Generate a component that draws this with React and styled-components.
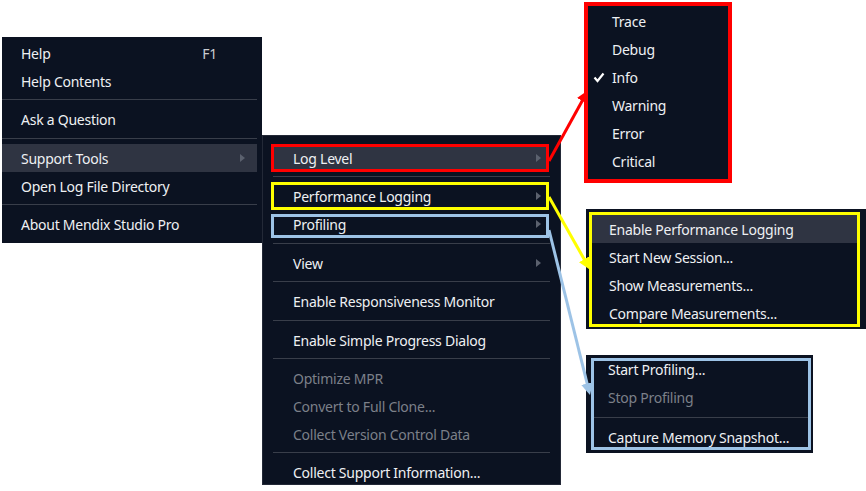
import React from "react";
import styled, { createGlobalStyle, css } from "styled-components";

const GlobalStyle = createGlobalStyle`
  html, body { margin: 0; padding: 0; background: #ffffff; }
  body { font-family: "Noto Sans", "Open Sans", Arial, sans-serif; }
  * { box-sizing: border-box; }
`;

const BG = "#0b1221";
const HILITE = "#2f3442";
const SEP = "#393e4a";

const Canvas = styled.div`
  position: relative;
  width: 866px;
  height: 491px;
  overflow: hidden;
  background: #ffffff;
`;

const Panel = styled.div`
  position: absolute;
  left: ${(p) => p.$x}px;
  top: ${(p) => p.$y}px;
  width: ${(p) => p.$w}px;
  height: ${(p) => p.$h}px;
  background: ${BG};
  display: flex;
  flex-direction: column;
  padding: ${(p) => p.$pad || "0"};
  border: ${(p) => p.$border || "none"};
  ${(p) =>
    p.$frame &&
    css`
      &::after {
        content: "";
        position: absolute;
        inset: ${p.$frameInset};
        border: 3px solid ${p.$frame};
        pointer-events: none;
      }
    `}
`;

const Item = styled.div`
  position: relative;
  flex: none;
  height: 28px;
  display: flex;
  align-items: center;
  margin: ${(p) => p.$margin || "0"};
  padding-left: ${(p) => p.$indent}px;
  padding-right: ${(p) => p.$rpad || 0}px;
  font-size: 14px;
  letter-spacing: -0.25px;
  color: ${(p) => (p.$disabled ? "#7c8089" : "#eef0f3")};
  background: ${(p) => (p.$active ? HILITE : "transparent")};
  white-space: nowrap;
  ${(p) =>
    p.$mark &&
    css`
      &::after {
        content: "";
        position: absolute;
        inset: ${p.$markTop || 0}px 0 0 0;
        border: 3px solid ${p.$mark};
        pointer-events: none;
      }
    `}
`;

const Label = styled.span`
  flex: 1;
`;

const Shortcut = styled.span`
  color: #c9ccd2;
  margin-right: ${(p) => p.$right}px;
`;

const SubArrow = styled.span`
  width: 0;
  height: 0;
  border-left: 5px solid #5b616e;
  border-top: 4px solid transparent;
  border-bottom: 4px solid transparent;
`;

const Separator = styled.div`
  flex: none;
  height: 1px;
  background: ${SEP};
  margin: ${(p) => p.$margin};
`;

const CheckSlot = styled.span`
  width: 19px;
  display: flex;
  align-items: center;
`;

const Overlay = styled.svg`
  position: absolute;
  left: 0;
  top: 0;
  pointer-events: none;
`;

const Check = () => (
  <svg width="12" height="11" viewBox="0 0 12 11">
    <polyline points="1.5,5.5 4.5,9 10.5,1.5" fill="none" stroke="#ffffff" strokeWidth="2.2" />
  </svg>
);

const MainItem = ({ children, shortcut, sub, active }) => (
  <Item $indent={19} $rpad={sub ? 12 : 0} $margin="0 5px 0 0" $active={active}>
    <Label>{children}</Label>
    {shortcut && <Shortcut $right={40}>{shortcut}</Shortcut>}
    {sub && <SubArrow />}
  </Item>
);

const SubItem = ({ children, sub, active, disabled, mark, markTop }) => (
  <Item
    $indent={22}
    $rpad={8}
    $margin="0 11px 0 8px"
    $active={active}
    $disabled={disabled}
    $mark={mark}
    $markTop={markTop}
  >
    <Label>{children}</Label>
    {sub && <SubArrow />}
  </Item>
);

const mainSep = "4px 5px 5px 0";
const subSep = "4px 10px 5px 10px";

export default function App() {
  return (
    <>
      <GlobalStyle />
      <Canvas>
        <Panel $x={2} $y={37} $w={260} $h={206} $pad="2px 0 0 0">
          <MainItem shortcut="F1">Help</MainItem>
          <MainItem>Help Contents</MainItem>
          <Separator $margin={mainSep} />
          <MainItem>Ask a Question</MainItem>
          <Separator $margin="5px 5px 5px 0" />
          <MainItem sub active>Support Tools</MainItem>
          <MainItem>Open Log File Directory</MainItem>
          <Separator $margin={mainSep} />
          <MainItem>About Mendix Studio Pro</MainItem>
        </Panel>

        <Panel
          $x={262}
          $y={135}
          $w={299}
          $h={350}
          $pad="8px 0 0 0"
          $border="1px solid #232937"
        >
          <SubItem sub active mark="#ff0000">Log Level</SubItem>
          <Separator $margin={subSep} />
          <SubItem sub mark="#ffff00">Performance Logging</SubItem>
          <SubItem sub mark="#9dc3e6" markTop={4}>Profiling</SubItem>
          <Separator $margin="5px 10px 5px 10px" />
          <SubItem sub>View</SubItem>
          <Separator $margin={subSep} />
          <SubItem>Enable Responsiveness Monitor</SubItem>
          <Separator $margin="5px 10px 5px 10px" />
          <SubItem>Enable Simple Progress Dialog</SubItem>
          <Separator $margin={subSep} />
          <SubItem disabled>Optimize MPR</SubItem>
          <SubItem disabled>Convert to Full Clone...</SubItem>
          <SubItem disabled>Collect Version Control Data</SubItem>
          <Separator $margin={subSep} />
          <SubItem>Collect Support Information...</SubItem>
        </Panel>

        <Panel $x={584} $y={2} $w={148} $h={181} $pad="1px 0 0 0" $border="4px solid #ff0000">
          {["Trace", "Debug", "Info", "Warning", "Error", "Critical"].map((l) => (
            <Item key={l} $indent={5}>
              <CheckSlot>{l === "Info" && <Check />}</CheckSlot>
              <Label>{l}</Label>
            </Item>
          ))}
        </Panel>

        <Panel
          $x={586}
          $y={209}
          $w={280}
          $h={120}
          $pad="6px 0 0 0"
          $frame="#ffff00"
          $frameInset="3px 6px 2px 3px"
        >
          <Item $indent={17} $margin="0 9px 0 6px" $active>Enable Performance Logging</Item>
          <Item $indent={17} $margin="0 9px 0 6px">Start New Session...</Item>
          <Item $indent={17} $margin="0 9px 0 6px">Show Measurements...</Item>
          <Item $indent={17} $margin="0 9px 0 6px">Compare Measurements...</Item>
        </Panel>

        <Panel
          $x={586}
          $y={355}
          $w={227}
          $h={98}
          $frame="#9dc3e6"
          $frameInset="3px 2px 3px 5px"
        >
          <Item $indent={22}>Start Profiling...</Item>
          <Item $indent={22} $disabled>Stop Profiling</Item>
          <Separator $margin="6px 5px 5px 5px" />
          <Item $indent={22}>Capture Memory Snapshot...</Item>
        </Panel>

        <Overlay width="866" height="491" viewBox="0 0 866 491">
          <defs>
            <marker id="hr" markerWidth="4" markerHeight="4" refX="2.6" refY="2" orient="auto">
              <path d="M0,0 L4,2 L0,4 z" fill="#ff0000" />
            </marker>
            <marker id="hy" markerWidth="4" markerHeight="4" refX="2.6" refY="2" orient="auto">
              <path d="M0,0 L4,2 L0,4 z" fill="#ffff00" />
            </marker>
            <marker id="hb" markerWidth="4" markerHeight="4" refX="2.6" refY="2" orient="auto">
              <path d="M0,0 L4,2 L0,4 z" fill="#9dc3e6" />
            </marker>
          </defs>
          <line x1="549" y1="161" x2="586" y2="94" stroke="#ff0000" strokeWidth="3" markerEnd="url(#hr)" />
          <line x1="549" y1="197" x2="588" y2="266" stroke="#ffff00" strokeWidth="3" markerEnd="url(#hy)" />
          <line x1="549" y1="230" x2="589" y2="391" stroke="#9dc3e6" strokeWidth="3" markerEnd="url(#hb)" />
        </Overlay>
      </Canvas>
    </>
  );
}
